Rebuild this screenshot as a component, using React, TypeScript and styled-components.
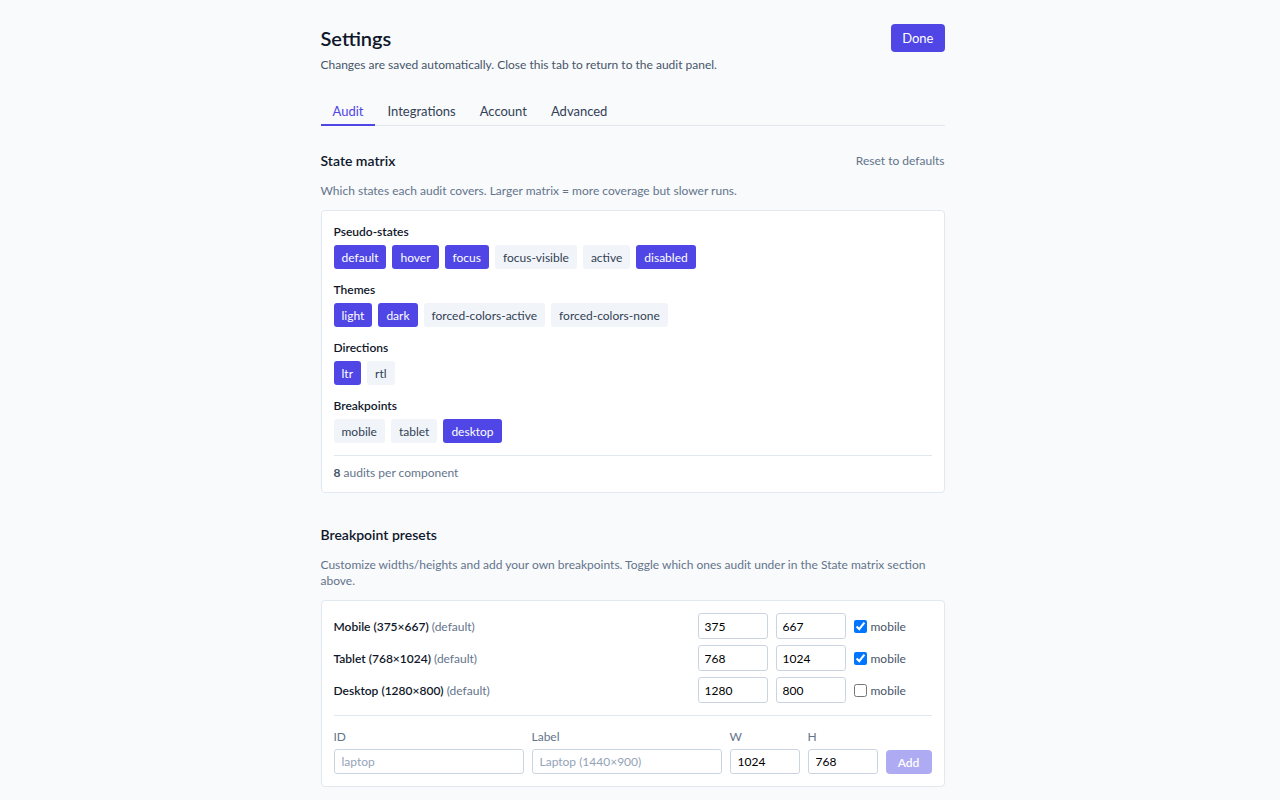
import { useState } from 'react';
import styled, { createGlobalStyle } from 'styled-components';

const GlobalStyle = createGlobalStyle`
  html, body {
    margin: 0;
    background: #f8fafc;
  }
  body {
    font-family: Lato, "Noto Sans", sans-serif;
    font-size: 13px;
    color: #0f172a;
  }
  * {
    box-sizing: border-box;
  }
`;

type Group = { label: string; items: string[]; on: string[] };

const GROUPS: Group[] = [
  {
    label: 'Pseudo-states',
    items: ['default', 'hover', 'focus', 'focus-visible', 'active', 'disabled'],
    on: ['default', 'hover', 'focus', 'disabled'],
  },
  {
    label: 'Themes',
    items: ['light', 'dark', 'forced-colors-active', 'forced-colors-none'],
    on: ['light', 'dark'],
  },
  { label: 'Directions', items: ['ltr', 'rtl'], on: ['ltr'] },
  {
    label: 'Breakpoints',
    items: ['mobile', 'tablet', 'desktop'],
    on: ['desktop'],
  },
];

const PRESETS = [
  { name: 'Mobile', w: 375, h: 667, mobile: true },
  { name: 'Tablet', w: 768, h: 1024, mobile: true },
  { name: 'Desktop', w: 1280, h: 800, mobile: false },
];

const TABS = ['Audit', 'Integrations', 'Account', 'Advanced'];

const App = () => {
  const [tab, setTab] = useState('Audit');
  const [groups, setGroups] = useState(GROUPS);

  const toggle = (label: string, item: string) => {
    setGroups(gs =>
      gs.map(g =>
        g.label !== label
          ? g
          : {
              ...g,
              on: g.on.includes(item)
                ? g.on.filter(i => i !== item)
                : [...g.on, item],
            }
      )
    );
  };

  return (
    <Shell>
      <GlobalStyle />
      <Page>
        <Header>
          <div>
            <Title>Settings</Title>
            <Subtitle>
              Changes are saved automatically. Close this tab to return to the
              audit panel.
            </Subtitle>
          </div>
          <PrimaryButton>Done</PrimaryButton>
        </Header>

        <Tabs>
          {TABS.map(t => (
            <Tab key={t} $active={t === tab} onClick={() => setTab(t)}>
              {t}
            </Tab>
          ))}
        </Tabs>

        <Section>
          <SectionHead>
            <SectionTitle>State matrix</SectionTitle>
            <LinkButton>Reset to defaults</LinkButton>
          </SectionHead>
          <SectionDesc>
            Which states each audit covers. Larger matrix = more coverage but
            slower runs.
          </SectionDesc>
          <Card>
            {groups.map(g => (
              <ChipGroup key={g.label}>
                <GroupLabel>{g.label}</GroupLabel>
                <ChipRow>
                  {g.items.map(i => (
                    <Chip
                      key={i}
                      $on={g.on.includes(i)}
                      onClick={() => toggle(g.label, i)}
                    >
                      {i}
                    </Chip>
                  ))}
                </ChipRow>
              </ChipGroup>
            ))}
            <CardFooter>
              <strong>8</strong> audits per component
            </CardFooter>
          </Card>
        </Section>

        <Section>
          <SectionHead>
            <SectionTitle>Breakpoint presets</SectionTitle>
          </SectionHead>
          <SectionDesc>
            Customize widths/heights and add your own breakpoints. Toggle which
            ones audit under in the State matrix section above.
          </SectionDesc>
          <Card>
            <PresetList>
              {PRESETS.map(p => (
                <PresetRow key={p.name}>
                  <PresetName>
                    <b>
                      {p.name} ({p.w}×{p.h})
                    </b>{' '}
                    <Muted>(default)</Muted>
                  </PresetName>
                  <SizeInput defaultValue={p.w} />
                  <SizeInput defaultValue={p.h} />
                  <CheckLabel>
                    <input type="checkbox" defaultChecked={p.mobile} />
                    mobile
                  </CheckLabel>
                </PresetRow>
              ))}
            </PresetList>
            <AddForm>
              <Field>
                <FieldLabel>ID</FieldLabel>
                <TextInput placeholder="laptop" />
              </Field>
              <Field>
                <FieldLabel>Label</FieldLabel>
                <TextInput placeholder="Laptop (1440×900)" />
              </Field>
              <Field>
                <FieldLabel>W</FieldLabel>
                <TextInput defaultValue="1024" />
              </Field>
              <Field>
                <FieldLabel>H</FieldLabel>
                <TextInput defaultValue="768" />
              </Field>
              <AddButton disabled>Add</AddButton>
            </AddForm>
          </Card>
        </Section>

        <Section>
          <SectionHead>
            <SectionTitle>Ignored selectors</SectionTitle>
          </SectionHead>
          <SectionDesc>
            Elements matching these selectors are skipped in every audit.
          </SectionDesc>
          <Card>
            <TallBox />
          </Card>
        </Section>

        <Section>
          <SectionHead>
            <SectionTitle>Reports</SectionTitle>
          </SectionHead>
          <SectionDesc>How results are grouped and exported.</SectionDesc>
          <Card>
            <TallBox />
          </Card>
        </Section>
      </Page>
    </Shell>
  );
};

// keeps a scrollbar-wide gutter on the right
const Shell = styled.div`
  padding-right: 15px;
`;

const Page = styled.div`
  max-width: 672px;
  margin: 0 auto;
  padding: 24px 24px 140px;
`;

const Header = styled.header`
  display: flex;
  justify-content: space-between;
  align-items: flex-start;
`;

const Title = styled.h1`
  margin: 2px 0 0;
  font-size: 20px;
  font-weight: 600;
  line-height: 24px;
`;

const Subtitle = styled.p`
  margin: 7px 0 0;
  font-size: 12px;
  line-height: 16px;
  color: #475569;
`;

const PrimaryButton = styled.button`
  height: 28px;
  padding: 0 11px;
  border: none;
  border-radius: 4px;
  background: #4f46e5;
  color: #fff;
  font: inherit;
  font-size: 13px;
  cursor: pointer;
`;

const Tabs = styled.nav`
  display: flex;
  margin-top: 25px;
  border-bottom: 1px solid #e2e8f0;
`;

const Tab = styled.button<{ $active: boolean }>`
  padding: 0 12px;
  height: 28px;
  border: none;
  border-bottom: 2px solid ${p => (p.$active ? '#4f46e5' : 'transparent')};
  margin-bottom: -1px;
  background: none;
  font: inherit;
  font-size: 13px;
  color: ${p => (p.$active ? '#4f46e5' : '#334155')};
  cursor: pointer;
`;

const Section = styled.section`
  margin-top: 23px;

  & + & {
    margin-top: 30px;
  }
`;

const SectionHead = styled.div`
  display: flex;
  justify-content: space-between;
  align-items: center;
  height: 22px;
`;

const SectionTitle = styled.h2`
  margin: 0;
  font-size: 14px;
  font-weight: 600;
`;

const LinkButton = styled.button`
  border: none;
  background: none;
  padding: 0;
  font: inherit;
  font-size: 12px;
  color: #64748b;
  cursor: pointer;
`;

const SectionDesc = styled.p`
  margin: 12px 0 11px;
  font-size: 12px;
  line-height: 16px;
  color: #64748b;
`;

const Card = styled.div`
  background: #fff;
  border: 1px solid #e2e8f0;
  border-radius: 4px;
  padding: 12px;
`;

const ChipGroup = styled.div`
  &:first-child {
    padding-top: 1px;
  }
  & + & {
    margin-top: 13px;
  }
`;

const GroupLabel = styled.div`
  font-size: 12px;
  font-weight: 600;
  line-height: 16px;
  margin-bottom: 5px;
`;

const ChipRow = styled.div`
  display: flex;
  flex-wrap: wrap;
  gap: 6px;
`;

const Chip = styled.button<{ $on: boolean }>`
  height: 24px;
  padding: 0 8px;
  border: none;
  border-radius: 3px;
  font: inherit;
  font-size: 12px;
  background: ${p => (p.$on ? '#4f46e5' : '#f1f5f9')};
  color: ${p => (p.$on ? '#fff' : '#334155')};
  cursor: pointer;
`;

const CardFooter = styled.div`
  margin-top: 12px;
  border-top: 1px solid #e2e8f0;
  padding-top: 10px;
  font-size: 12px;
  line-height: 14px;
  color: #64748b;

  strong {
    color: #475569;
  }
`;

const PresetList = styled.div`
  display: flex;
  flex-direction: column;
  gap: 6px;
  padding-bottom: 12px;
  border-bottom: 1px solid #e2e8f0;
`;

const PresetRow = styled.div`
  display: flex;
  align-items: center;
  gap: 8px;
`;

const PresetName = styled.div`
  flex: 1;
  font-size: 12px;

  b {
    font-weight: 600;
  }
`;

const Muted = styled.span`
  color: #64748b;
`;

const SizeInput = styled.input`
  width: 70px;
  height: 26px;
  padding: 0 6px;
  border: 1px solid #cbd5e1;
  border-radius: 3px;
  font: inherit;
  font-size: 12px;
  color: #000;
`;

const CheckLabel = styled.label`
  display: flex;
  align-items: center;
  gap: 4px;
  width: 78px;
  font-size: 12px;
  color: #475569;

  input {
    margin: 0;
    width: 13px;
    height: 13px;
  }
`;

const AddForm = styled.div`
  display: grid;
  grid-template-columns: 1fr 1fr 70px 70px 46px;
  gap: 8px;
  align-items: end;
  padding-top: 13px;
`;

const Field = styled.label`
  display: flex;
  flex-direction: column;
  gap: 5px;
`;

const FieldLabel = styled.span`
  font-size: 12px;
  color: #64748b;
`;

const TextInput = styled.input`
  height: 25px;
  padding: 0 7px;
  border: 1px solid #cbd5e1;
  border-radius: 3px;
  font: inherit;
  font-size: 12px;
  color: #000;

  &::placeholder {
    color: #94a3b8;
  }
`;

const AddButton = styled.button`
  height: 24px;
  border: none;
  border-radius: 4px;
  background: #4f46e5;
  color: #fff;
  font: inherit;
  font-size: 12px;
  font-weight: 600;

  &:disabled {
    opacity: 0.45;
  }
`;

const TallBox = styled.div`
  height: 540px;
`;

export default App;
